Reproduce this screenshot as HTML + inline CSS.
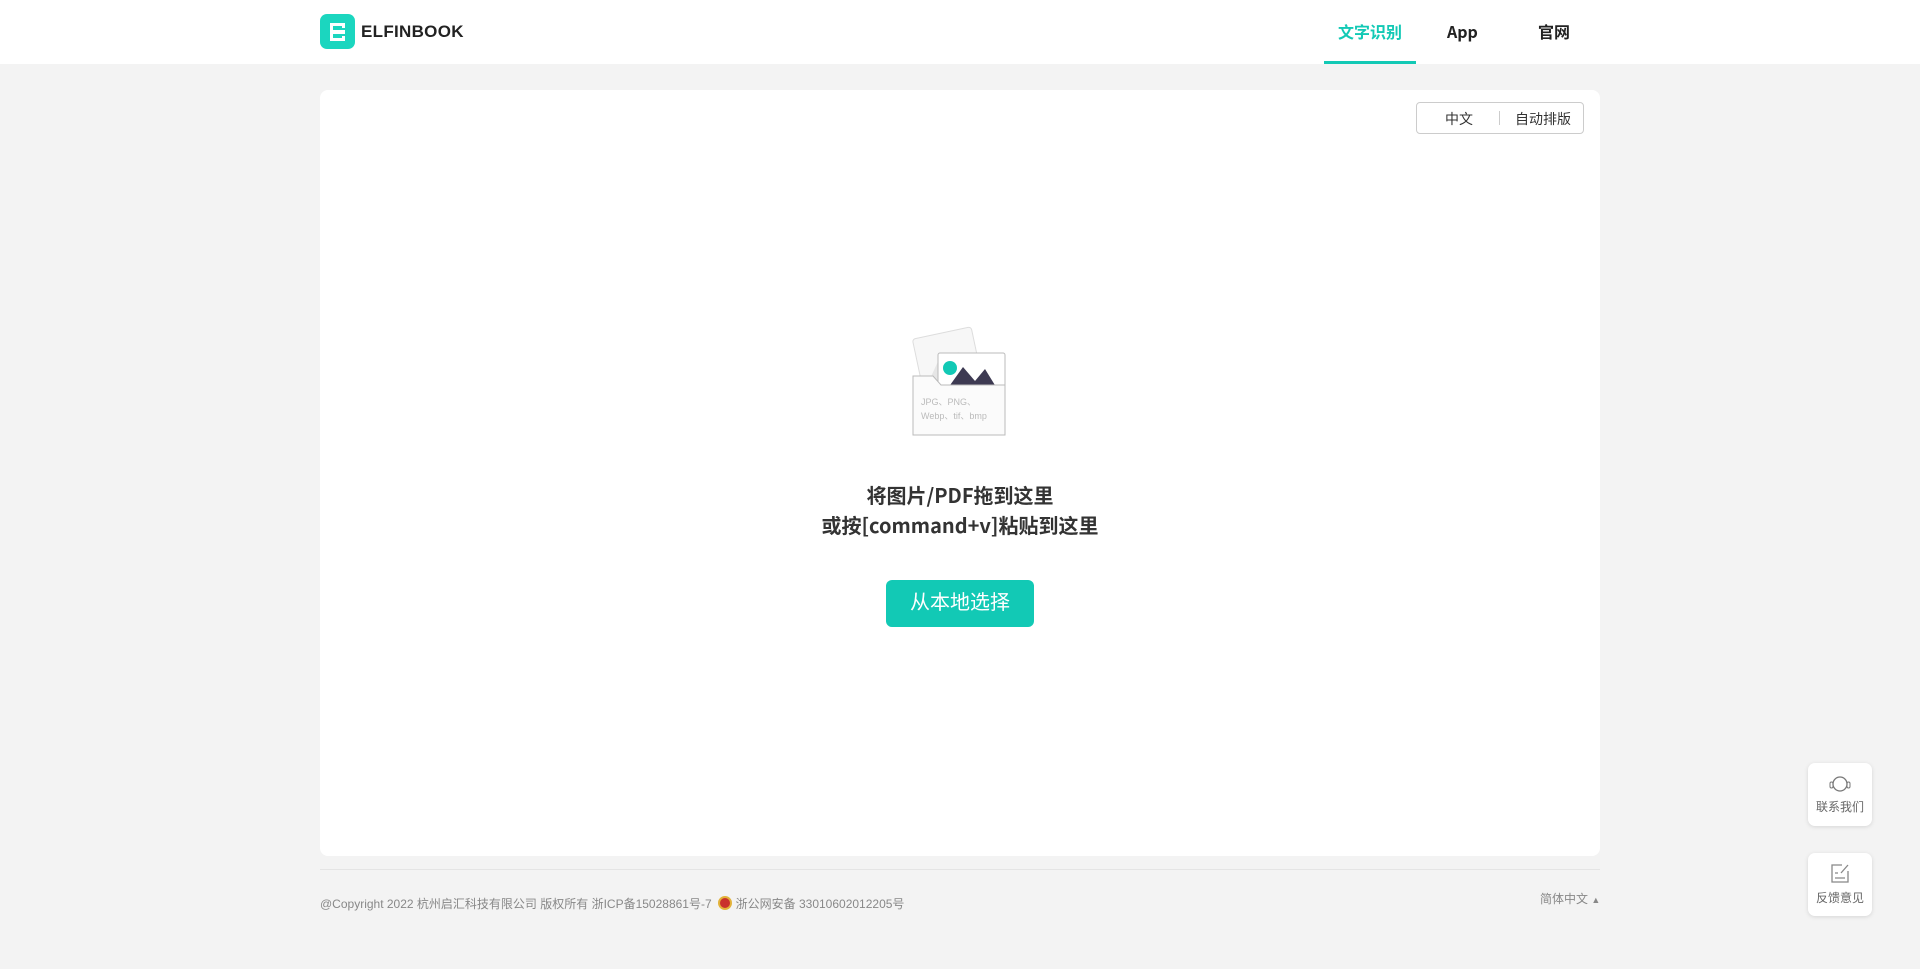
<!DOCTYPE html>
<html><head><meta charset="utf-8"><style>
*{margin:0;padding:0;box-sizing:border-box}
body{width:1920px;height:969px;background:#f3f3f3;font-family:"Liberation Sans","Noto Sans CJK SC",sans-serif;position:relative;overflow:hidden}
.hdr{position:absolute;left:0;top:0;width:1920px;height:64px;background:#fff}
.logo{position:absolute;left:320px;top:14px;width:35px;height:35px;border-radius:7px;background:#1bd6bf}
.brand{position:absolute;left:361px;top:22px;font-size:17px;font-weight:bold;color:#222;letter-spacing:0.3px}
.nav{position:absolute;top:20px;height:22px;line-height:22px;font-size:16px;font-weight:bold;color:#222;font-family:"Noto Sans CJK SC","Liberation Sans",sans-serif}
.ul{position:absolute;left:1324px;top:61px;width:92px;height:3px;background:#12c9b5}
.card{position:absolute;left:320px;top:90px;width:1280px;height:766px;background:#fff;border-radius:8px}
.tog{position:absolute;left:1096px;top:12px;width:168px;height:32px;border:1px solid #ccc;border-radius:4px;font-size:14px;color:#333}
.t1{position:absolute;top:15px;font-weight:bold;color:#333;text-align:center;width:100%;line-height:30px;font-family:"Noto Sans CJK SC","Liberation Sans",sans-serif}
.btn{position:absolute;left:566px;top:490px;width:148px;height:47px;background:#12c9b5;border-radius:6px;color:#fff;font-size:20px;text-align:center;line-height:47px}
.hr{position:absolute;left:320px;top:869px;width:1280px;height:1px;background:#e4e4e4}
.ft{position:absolute;left:320px;top:895px;font-size:12px;color:#888}
.side{position:absolute;left:1808px;width:64px;height:63px;background:#fff;border-radius:7px;box-shadow:0 1px 4px rgba(0,0,0,.12);font-size:12px;color:#666;text-align:center}
</style></head><body>
<div class="hdr">
<div class="logo"><svg width="35" height="35" viewBox="0 0 35 35"><path d="M10 9h15v5h-3v-2h-9v4h12v4h-12v4h9v-2h3v5h-15z" fill="#fff"/></svg></div>
<div class="brand">ELFINBOOK</div>
<div class="nav" style="left:1338px;color:#12c9b5">文字识别</div>
<div class="nav" style="left:1447px">App</div>
<div class="nav" style="left:1538px">官网</div>
<div class="ul"></div>
</div>
<div class="card">
<div class="tog"><span style="position:absolute;left:28px;top:6px">中文</span><span style="position:absolute;left:82px;top:8px;width:1px;height:14px;background:#ccc"></span><span style="position:absolute;left:98px;top:6px">自动排版</span></div>
<svg style="position:absolute;left:590px;top:233px" width="100" height="115" viewBox="0 0 100 115">
<g transform="rotate(-12 35 40)"><rect x="8" y="10" width="60" height="55" rx="3" fill="#f7f7f7" stroke="#ddd"/><path d="M15 55l15-20 10 12 10-15 15 23z" fill="#e6e6e6"/></g>
<rect x="28" y="30" width="67" height="50" rx="2" fill="#fff" stroke="#bbb"/>
<circle cx="40" cy="45" r="7" fill="#12c9b5"/>
<path d="M33 72l20-28 12 14 10-12 16 26z" fill="#3d3a52"/>
<path d="M3 53h20l8 9h64v50h-92z" fill="#fbfbfb" stroke="#bbb"/>
<text x="11" y="82" font-size="9" fill="#bbb" font-family="Liberation Sans">JPG、PNG、</text>
<text x="11" y="96" font-size="9" fill="#bbb" font-family="Liberation Sans">Webp、tif、bmp</text>
</svg>
<div class="t1" style="top:390px;font-size:20px">将图片/PDF拖到这里<br>或按[command+v]粘贴到这里</div>
<div class="btn">从本地选择</div>
</div>
<div class="hr"></div>
<div class="ft">@Copyright 2022 杭州启汇科技有限公司 版权所有 浙ICP备15028861号-7 &nbsp;<span style="display:inline-block;width:14px;height:14px;border-radius:50%;background:#c9302c;border:2px solid #e2b23a;vertical-align:-2px"></span> 浙公网安备 33010602012205号</div>
<div class="ft" style="left:1540px;top:890px">简体中文 <span style="font-size:9px">▲</span></div>
<div class="side" style="top:763px"><svg style="margin-top:10px" width="26" height="20" viewBox="0 0 26 20"><circle cx="13" cy="11" r="7" fill="none" stroke="#777" stroke-width="1.3"/><rect x="3" y="9" width="3" height="6" rx="1.5" fill="none" stroke="#777"/><rect x="20" y="9" width="3" height="6" rx="1.5" fill="none" stroke="#777"/></svg><div style="margin-top:2px">联系我们</div></div>
<div class="side" style="top:853px"><svg style="margin-top:9px" width="22" height="22" viewBox="0 0 22 22"><path d="M13 3H3v17h16V9" fill="none" stroke="#888" stroke-width="1.3"/><path d="M12 11l7-8M6 11h3M6 16h10" stroke="#888" stroke-width="1.3"/></svg><div style="margin-top:2px">反馈意见</div></div>
</body></html>
